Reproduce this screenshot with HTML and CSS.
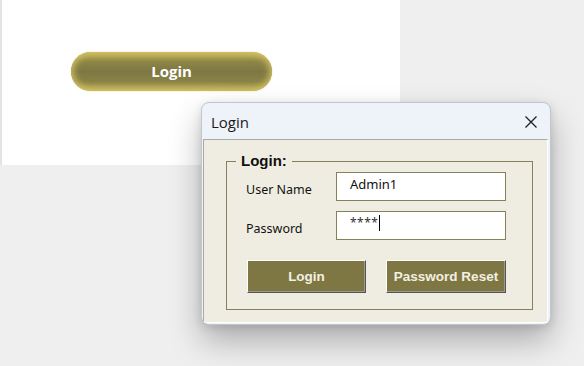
FILE: index.html
```html
<!DOCTYPE html>
<html lang="en">
<head>
<meta charset="utf-8">
<title>Login</title>
<link rel="stylesheet" href="styles.css">
</head>
<body>
  <div class="desktop">
    <section class="panel">
      <button class="pill">Login</button>
    </section>

    <div class="dialog">
      <header class="titlebar">
        <span class="title">Login</span>
        <svg class="close" width="12" height="12" viewBox="0 0 12 12" aria-label="Close">
          <path d="M0.5 0.5 L11.5 11.5 M11.5 0.5 L0.5 11.5" stroke="#1f1f1f" stroke-width="1.3" fill="none"/>
        </svg>
      </header>
      <div class="client">
        <fieldset class="group">
          <legend class="legend">Login:</legend>
          <div class="form">
            <label class="label">User Name</label>
            <div class="field">Admin1</div>
            <label class="label">Password</label>
            <div class="field field-pass">****<span class="caret"></span></div>
            <div class="buttons">
              <button class="btn btn-login">Login</button>
              <button class="btn btn-reset">Password Reset</button>
            </div>
          </div>
        </fieldset>
      </div>
    </div>
  </div>
</body>
</html>
```

FILE: styles.css
```css
html, body {
  margin: 0;
  padding: 0;
}
body {
  width: 584px;
  height: 366px;
  overflow: hidden;
  background: #efefef;
}
.desktop {
  position: relative;
  width: 584px;
  height: 366px;
}
.panel {
  width: 398px;
  height: 165px;
  margin-left: 2px;
  background: #ffffff;
  box-shadow: -2px 0 0 #e4e4e4;
  padding-top: 52px;
  padding-left: 69px;
  box-sizing: border-box;
}
.pill {
  display: flex;
  align-items: center;
  justify-content: center;
  width: 201px;
  height: 39px;
  border: none;
  border-radius: 20px;
  background: linear-gradient(to bottom, #c4b55a 0%, #8d8646 24%, #7e7743 50%, #898246 76%, #beb057 100%);
  box-shadow: inset 0 0 7px 2px #d2c262, 0 0 2px rgba(220, 205, 120, 0.6);
  color: #ffffff;
  font-family: "Open Sans", "Noto Sans", sans-serif;
  font-weight: 700;
  font-size: 15px;
  padding: 0 0 1px 0;
}
.dialog {
  position: absolute;
  left: 201px;
  top: 102px;
  width: 350px;
  box-sizing: border-box;
  border: 1px solid #c3c6cc;
  border-radius: 8px;
  background: #eef2f9;
  box-shadow: 0 16px 32px rgba(0, 0, 0, 0.28), 0 2px 8px rgba(0, 0, 0, 0.12);
  overflow: hidden;
}
.titlebar {
  height: 36px;
  display: flex;
  align-items: center;
  justify-content: space-between;
  padding: 0 13px 0 9px;
  box-sizing: border-box;
}
.title {
  font-family: "Open Sans", "Noto Sans", sans-serif;
  font-size: 15px;
  color: #1a1a1a;
  padding-top: 1px;
}
.close {
  display: block;
  margin-top: 1px;
}
.client {
  margin: 0 2px 1px 1px;
  border: 1px solid;
  border-color: #a9a9a9 #ffffff #ffffff #a9a9a9;
  background: #efede1;
  padding: 12px 14px 12px 22px;
}
.group {
  margin: 0;
  border: 1px solid #857f5c;
  padding: 2px 20px 16px 9px;
  min-width: 0;
}
.legend {
  padding: 0 5px;
  font-family: "Liberation Sans", Arial, sans-serif;
  font-weight: 700;
  font-size: 15px;
  line-height: 18px;
  color: #111111;
}
.form {
  margin-left: 10px;
  display: grid;
  grid-template-columns: 90px 170px;
  grid-template-rows: 29px 29px 43px;
  row-gap: 10px;
  align-items: center;
}
.label {
  font-family: "Noto Sans", "DejaVu Sans", sans-serif;
  font-size: 12.5px;
  color: #111111;
  padding-top: 5px;
}
.field {
  height: 29px;
  box-sizing: border-box;
  border: 1px solid #857f5c;
  background: #ffffff;
  font-family: "Noto Sans", "DejaVu Sans", sans-serif;
  font-size: 13px;
  color: #111111;
  padding: 2px 0 0 13px;
  line-height: 18px;
  display: flex;
  align-items: flex-start;
}
.field-pass {
  color: #333333;
  font-size: 12px;
  letter-spacing: 0.5px;
}
.caret {
  display: inline-block;
  width: 1px;
  height: 16px;
  background: #000000;
  margin: 1px 0 0 1px;
}
.buttons {
  grid-column: 1 / span 2;
  align-self: end;
  display: flex;
  justify-content: space-between;
  margin-left: 1px;
  height: 33px;
}
.btn {
  height: 33px;
  box-sizing: border-box;
  border: 1px solid;
  border-color: #ffffff #555555 #555555 #ffffff;
  box-shadow: inset -1px -1px 0 #9a9a90;
  background: #7e7743;
  color: #f2f0e2;
  font-family: "Liberation Sans", Arial, sans-serif;
  font-weight: 700;
  font-size: 13.5px;
  padding: 0 0 1px 0;
}
.btn-login {
  width: 119px;
}
.btn-reset {
  width: 120px;
}
```
